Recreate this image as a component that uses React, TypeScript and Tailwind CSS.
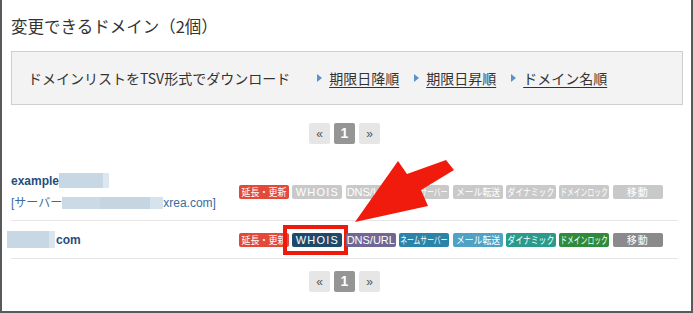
import React from 'react';

const LABELS = ['延長・更新', 'WHOIS', 'DNS/URL', 'ネームサーバー', 'メール転送', 'ダイナミック', 'ドメインロック', '移動'];

const TEXT_CLS = [
  "font-['Noto_Sans_CJK_JP',sans-serif] text-[10px] leading-[14px] inline-block scale-x-[0.9]",
  "font-['Liberation_Sans',sans-serif] text-[11px] leading-[14px] tracking-[1.2px] inline-block",
  "font-['Liberation_Sans',sans-serif] text-[11px] leading-[14px] inline-block",
  "font-['Noto_Sans_CJK_JP',sans-serif] text-[10px] leading-[14px] inline-block scale-x-[0.68]",
  "font-['Noto_Sans_CJK_JP',sans-serif] text-[10px] leading-[14px] inline-block scale-x-[0.88]",
  "font-['Noto_Sans_CJK_JP',sans-serif] text-[10px] leading-[14px] inline-block scale-x-[0.78]",
  "font-['Noto_Sans_CJK_JP',sans-serif] text-[10px] leading-[14px] inline-block scale-x-[0.68]",
  "font-['Noto_Sans_CJK_JP',sans-serif] text-[10px] leading-[14px] inline-block tracking-[1px]",
];

const ROW1 = ['bg-[#e2493b]', 'bg-[#c9c9c9]', 'bg-[#c9c9c9]', 'bg-[#c9c9c9]', 'bg-[#c9c9c9]', 'bg-[#c9c9c9]', 'bg-[#c9c9c9]', 'bg-[#c9c9c9]'];
const ROW2 = ['bg-[#e2493b]', 'bg-[#1d4a6b]', 'bg-[#6f6794]', 'bg-[#2a83a8]', 'bg-[#4fa2c4]', 'bg-[#2a9b8b]', 'bg-[#2f8b3b]', 'bg-[#8a8a8a]'];

function Buttons({ colors, highlight }: { colors: string[]; highlight?: boolean }) {
  return (
    <div className="flex gap-[3.4px]">
      {LABELS.map((l, i) => (
        <div
          key={l}
          className={`relative w-[50px] h-[14px] shrink-0 rounded-[2px] ${colors[i]} text-white flex items-center justify-center whitespace-nowrap`}
        >
          <span className={TEXT_CLS[i]}>{l}</span>
          {highlight && i === 1 && (
            <div className="absolute -left-[9px] -right-[6px] -top-[8px] -bottom-[8px] border-[4px] border-[#ee1a0c]" />
          )}
        </div>
      ))}
    </div>
  );
}

function Pager() {
  return (
    <div className="flex justify-center gap-[4px] pr-[5px]">
      <div className="w-[21px] h-[21px] rounded-[2px] bg-[#e6e6e6] text-[#555] text-[12px] flex items-center justify-center font-['Liberation_Sans',sans-serif]">
        «
      </div>
      <div className="w-[21px] h-[21px] rounded-[2px] bg-[#959595] text-white text-[14px] font-bold flex items-center justify-center font-['Liberation_Sans',sans-serif]">
        1
      </div>
      <div className="w-[21px] h-[21px] rounded-[2px] bg-[#e6e6e6] text-[#555] text-[12px] flex items-center justify-center font-['Liberation_Sans',sans-serif]">
        »
      </div>
    </div>
  );
}

function Tri() {
  return (
    <svg width="5" height="8" viewBox="0 0 5 8" className="mr-[7px] shrink-0">
      <path d="M0 0 L5 4 L0 8 Z" fill="#5d92c8" />
    </svg>
  );
}

export default function App() {
  return (
    <div className="relative w-[693px] h-[313px] bg-white border-l-2 border-r-2 border-b-2 border-[#5a5a5a] box-border overflow-hidden font-['Liberation_Sans','Noto_Sans_CJK_JP',sans-serif] text-[#333]">
      <div className="pl-[9px] pr-[8px]">
        <h2 className="pt-[14px] h-[38px] text-[16.5px] leading-[24px] text-[#333] font-normal font-['Noto_Sans_CJK_JP',sans-serif]">
          変更できるドメイン（2個）
        </h2>
        <div className="mt-[13px] h-[54px] bg-[#f3f3f3] border border-[#cfcfcf] flex items-center pl-[16px] font-['Noto_Sans_CJK_JP',sans-serif]">
          <span className="text-[14px] leading-[20px] mr-[27px]">ドメインリストをTSV形式でダウンロード</span>
          <div className="flex items-center text-[14px] leading-[20px]">
            <Tri />
            <span className="underline underline-offset-[3px] mr-[15px]">期限日降順</span>
            <Tri />
            <span className="underline underline-offset-[3px] mr-[15px]">期限日昇順</span>
            <Tri />
            <span className="underline underline-offset-[3px]">ドメイン名順</span>
          </div>
        </div>
        <div className="mt-[18px]">
          <Pager />
        </div>
        <div className="mt-[19px] mr-[5px] h-[58px] border-b border-[#e6e6e6] flex items-center">
          <div className="w-[228px] shrink-0 text-[12px] leading-[22px] text-[#1f4f7c]">
            <div className="flex items-center">
              <span className="font-bold">example</span>
              <span className="inline-block h-[15px] w-[44px] bg-[#c7d7e4]" />
              <span className="inline-block h-[15px] w-[6px] bg-[#dde7ef]" />
            </div>
            <div className="flex items-center text-[#3a6b9c]">
              <span>[サーバー</span>
              <span className="inline-block h-[12px] w-[38px] bg-[#cbdae6]" />
              <span className="inline-block h-[12px] w-[50px] bg-[#c5d5e2]" />
              <span className="inline-block h-[12px] w-[13px] bg-[#d6e2ec]" />
              <span>xrea.com]</span>
            </div>
          </div>
          <Buttons colors={ROW1} />
        </div>
        <div className="mr-[5px] h-[38px] border-b border-[#e6e6e6] flex items-center">
          <div className="w-[232px] -ml-[4px] shrink-0 text-[12px] leading-[22px] text-[#1f4f7c] flex items-center">
            <span className="inline-block h-[17px] w-[42px] bg-[#c7d7e4]" />
            <span className="inline-block h-[17px] w-[6px] bg-[#dbe5ee]" />
            <span className="font-bold ml-[1px]">com</span>
          </div>
          <Buttons colors={ROW2} highlight />
        </div>
        <div className="mt-[12px]">
          <Pager />
        </div>
      </div>
      <svg className="absolute left-0 top-0 pointer-events-none" width="693" height="313" viewBox="0 0 693 313">
        <polygon
          points="353,222 396,161 405,174 444,160 452,170 419,190 426,206"
          fill="#f01b0c"
        />
      </svg>
    </div>
  );
}
